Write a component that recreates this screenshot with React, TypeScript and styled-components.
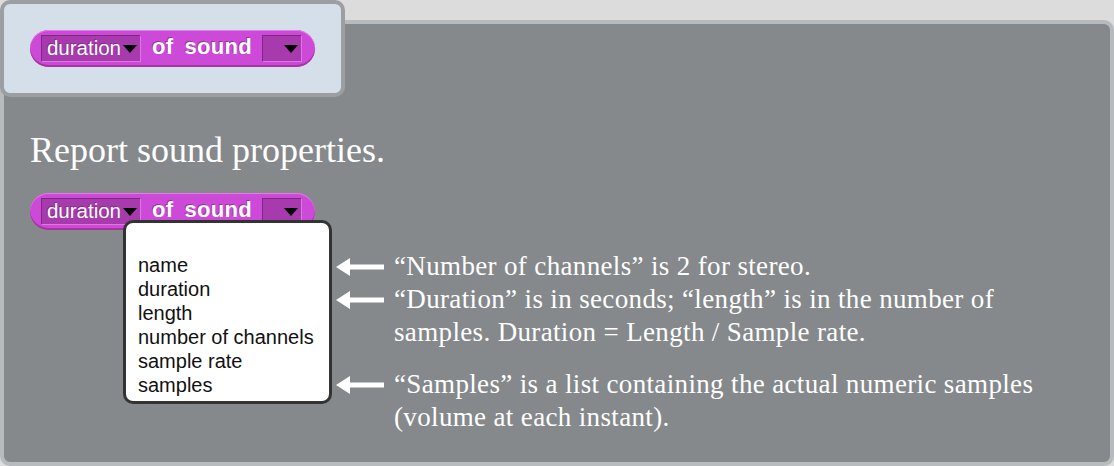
import React from 'react'
import { styled, createGlobalStyle } from 'styled-components'

const GlobalStyle = createGlobalStyle`
    html, body {
        margin: 0;
        padding: 0;
        background: #dcdcdc;
    }
    body {
        width: 1114px;
        height: 466px;
        overflow: hidden;
        font-family: "Liberation Sans", Arial, sans-serif;
    }
`;

const menuItems = ['name', 'duration', 'length', 'number of channels', 'sample rate', 'samples']

const notes = [
    { lines: ['“Number of channels” is 2 for stereo.'], spaced: false },
    {
        lines: ['“Duration” is in seconds; “length” is in the number of', 'samples. Duration = Length / Sample rate.'],
        spaced: false,
    },
    {
        lines: ['“Samples” is a list containing the actual numeric samples', '(volume at each instant).'],
        spaced: true,
    },
]

const DropArrow = () => (
    <svg width="14" height="8" viewBox="0 0 14 8">
        <polygon points="0,0 14,0 7,8" fill="#000" />
    </svg>
)

const LeftArrow = () => (
    <svg width="48" height="20" viewBox="0 0 48 20">
        <polygon points="0,10 14,1 14,19" fill="#fff" />
        <rect x="12" y="7.5" width="36" height="5" fill="#fff" />
    </svg>
)

const SoundBlock = () => {
    return (
        <Block>
            <Slot $width={100}>
                <SlotText>duration</SlotText>
                <DropArrow />
            </Slot>
            <Words>
                <Label>of</Label>
                <Label>sound</Label>
            </Words>
            <Slot $width={40}>
                <DropArrow />
            </Slot>
        </Block>
    )
}

const App = () => {
    return (
        <>
            <GlobalStyle />
            <Stage>
                <Panel>
                    <Heading>Report sound properties.</Heading>
                    <Demo>
                        <BlockColumn>
                            <SoundBlock />
                            <Menu>
                                {menuItems.map((item) => (
                                    <MenuItem key={item}>{item}</MenuItem>
                                ))}
                            </Menu>
                        </BlockColumn>
                        <Notes>
                            {notes.map((note, i) => (
                                <Note key={i} $spaced={note.spaced}>
                                    <ArrowBox>
                                        <LeftArrow />
                                    </ArrowBox>
                                    <NoteText>
                                        {note.lines.map((line) => (
                                            <div key={line}>{line}</div>
                                        ))}
                                    </NoteText>
                                </Note>
                            ))}
                        </Notes>
                    </Demo>
                </Panel>
                <Card>
                    <SoundBlock />
                </Card>
            </Stage>
        </>
    )
}

const Stage = styled.div`
    position: relative;
    width: 1114px;
    height: 466px;
    padding-top: 20px;
    box-sizing: border-box;
`;

const Card = styled.div`
    position: absolute;
    top: 0;
    left: 0;
    width: 345px;
    height: 97px;
    box-sizing: border-box;
    padding: 26px;
    background: #d5dfe9;
    border: 4px solid #9b9fa2;
    border-radius: 10px;
`;

const Panel = styled.div`
    height: 446px;
    box-sizing: border-box;
    padding: 106px 26px 0 26px;
    background: #85898b;
    border: 4px solid #b7bbbe;
    border-radius: 10px;
    display: flex;
    flex-direction: column;
`;

const Heading = styled.h1`
    margin: 0 0 22px 0;
    font-family: "Liberation Serif", "Times New Roman", serif;
    font-weight: normal;
    font-size: 36px;
    line-height: 41px;
    color: #fff;
`;

const Demo = styled.div`
    display: flex;
    align-items: flex-start;
`;

const BlockColumn = styled.div`
    position: relative;
    width: 306px;
    flex-shrink: 0;
`;

const Block = styled.div`
    display: inline-flex;
    align-items: center;
    width: 285px;
    height: 37px;
    box-sizing: border-box;
    padding: 0 13px 0 11px;
    background: #cd49d7;
    border-radius: 19px;
    box-shadow: inset 0 1px 0 #e27ce8, inset 0 -2px 0 #a7349f;
`;

const Slot = styled.div<{ $width: number }>`
    display: flex;
    align-items: center;
    justify-content: flex-end;
    gap: 2px;
    width: ${(p) => p.$width}px;
    height: 27px;
    box-sizing: border-box;
    padding: 0 3px;
    background: #a73bae;
    border-top: 1px solid #80287f;
    border-left: 1px solid #80287f;
    border-bottom: 1px solid #dc78e2;
    border-right: 1px solid #dc78e2;
`;

const SlotText = styled.span`
    font-size: 20.5px;
    color: #fff;
    line-height: 1;
    text-shadow: -1px -1px 0 rgba(0, 0, 0, 0.25);
`;

const Words = styled.div`
    display: flex;
    gap: 11px;
    padding: 0 10px 0 11px;
    margin-top: -3px;
`;

const Label = styled.span`
    font-size: 22px;
    font-weight: bold;
    letter-spacing: 0.3px;
    color: #fff;
    text-shadow: -1px -1px 0 rgba(0, 0, 0, 0.3);
`;

const Menu = styled.div`
    position: absolute;
    top: 27px;
    left: 93px;
    width: 209px;
    box-sizing: border-box;
    padding: 30px 12px 4px 12px;
    background: #fff;
    border: 3px solid #333;
    border-radius: 10px;
`;

const MenuItem = styled.div`
    font-size: 20px;
    line-height: 24px;
    color: #111;
    white-space: nowrap;
`;

const Notes = styled.div`
    padding-top: 57px;
    display: flex;
    flex-direction: column;
`;

const Note = styled.div<{ $spaced: boolean }>`
    display: flex;
    align-items: flex-start;
    gap: 10px;
    margin-top: ${(p) => (p.$spaced ? '20px' : '0')};
`;

const ArrowBox = styled.div`
    height: 33px;
    display: flex;
    align-items: center;
`;

const NoteText = styled.div`
    font-family: "Liberation Serif", "Times New Roman", serif;
    font-size: 27px;
    letter-spacing: 0.35px;
    line-height: 32.5px;
    color: #fff;
    white-space: nowrap;
`;

export default App
